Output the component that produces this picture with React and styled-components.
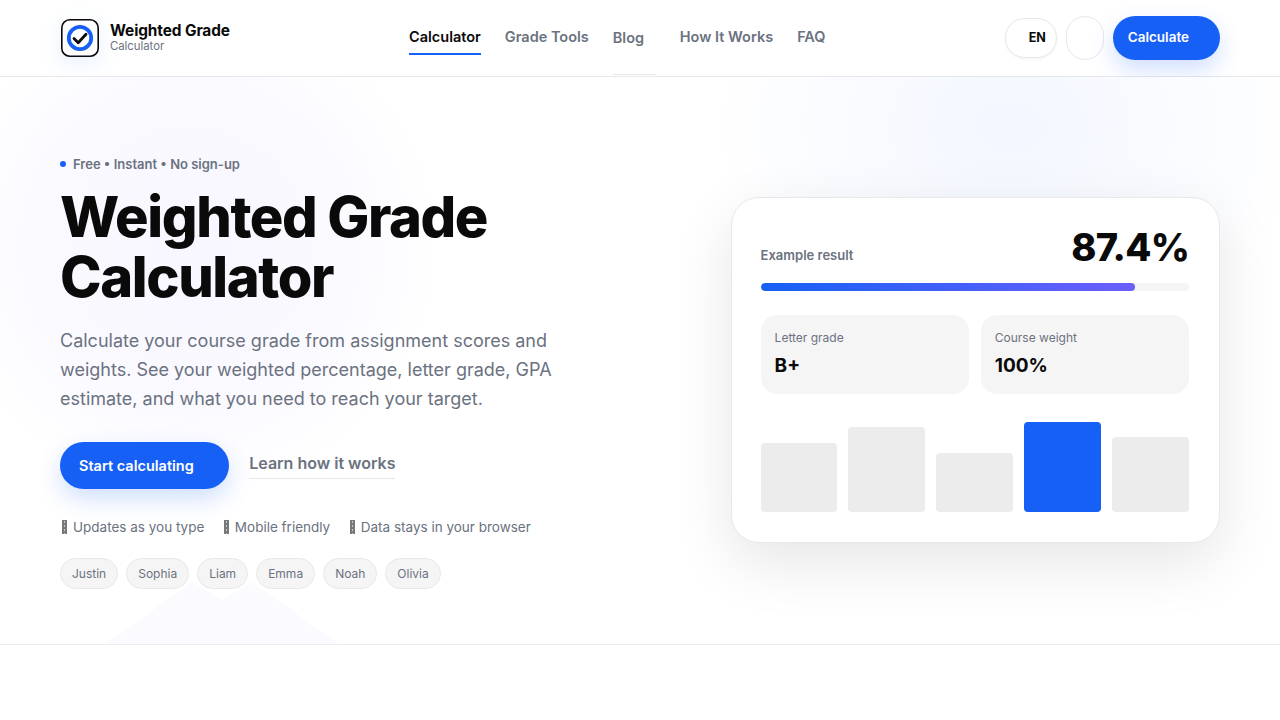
import React from "react";
import styled, { createGlobalStyle } from "styled-components";

const GlobalStyle = createGlobalStyle`
  * { box-sizing: border-box; }
  body {
    margin: 0;
    background: #fff;
    color: #0a0a0a;
    font-family: Inter, "Noto Sans", sans-serif;
  }
`;

const Header = styled.header`
  height: 77px;
  padding: 0 60px;
  display: grid;
  grid-template-columns: 349px 1fr auto;
  background: #fff;
  border-bottom: 1px solid #e8e8ea;
`;

const Brand = styled.div`
  display: flex;
  align-items: center;
  gap: 11px;
  padding-left: 1px;
`;

const LogoMark = styled.svg`
  filter: drop-shadow(0 6px 10px rgba(22, 96, 245, 0.1));
`;

const BrandText = styled.div`
  display: flex;
  flex-direction: column;
  margin-top: -1px;
`;

const BrandName = styled.span`
  font-size: 15.4px;
  font-weight: 700;
  line-height: 16px;
  letter-spacing: -0.1px;
`;

const BrandSub = styled.span`
  font-size: 11.3px;
  line-height: 14px;
  color: #6b7280;
`;

const Nav = styled.nav`
  display: flex;
  align-items: flex-start;
  gap: 24px;
`;

const NavLink = styled.a`
  height: 55px;
  padding-top: 28px;
  font-size: 14.5px;
  font-weight: 600;
  line-height: 18px;
  color: ${(p) => (p.$active ? "#0a0a0a" : "#6b7280")};
  border-bottom: 2px solid ${(p) => (p.$active ? "#1660f5" : "transparent")};
`;

const BlogLink = styled.a`
  width: 43px;
  height: 76px;
  padding-top: 30px;
  font-size: 14.5px;
  font-weight: 600;
  line-height: 18px;
  color: #6b7280;
  border-bottom: 1px solid #e6e6e8;
  margin-top: -1px;
`;

const Actions = styled.div`
  display: flex;
  align-items: center;
  gap: 9px;
  height: 76px;
`;

const LangButton = styled.button`
  width: 52px;
  height: 40px;
  padding: 0 0 2px 23px;
  text-align: left;
  border: 1px solid #e8e8ea;
  border-radius: 999px;
  background: #fff;
  font: 700 12.5px Inter, sans-serif;
  color: #0a0a0a;
  box-shadow: 0 1px 3px rgba(0, 0, 0, 0.05);
`;

const RoundButton = styled.button`
  width: 38px;
  height: 44px;
  border: 1px solid #e8e8ea;
  border-radius: 999px;
  background: #fff;
`;

const PrimaryButton = styled.button`
  height: ${(p) => (p.$large ? "47px" : "44px")};
  padding: ${(p) => (p.$large ? "0 35px 0 19px" : "0 31px 2px 15px")};
  border: none;
  border-radius: 999px;
  background: #1660f5;
  color: #fff;
  font: 600 ${(p) => (p.$large ? "14.5px" : "13.5px")} Inter, sans-serif;
  box-shadow: 0 10px 24px rgba(22, 96, 245, 0.2);
`;

const Hero = styled.section`
  position: relative;
  overflow: hidden;
  height: 568px;
  padding: 79px 60px 0;
  display: grid;
  grid-template-columns: 1fr 489.4px;
  background:
    radial-gradient(circle at 190px 170px, rgba(124, 92, 255, 0.055), rgba(124, 92, 255, 0.03) 170px, rgba(124, 92, 255, 0) 250px),
    radial-gradient(ellipse 300px 240px at 1010px 50px, rgba(22, 96, 245, 0.055), rgba(22, 96, 245, 0) 100%),
    #fff;
  border-bottom: 1px solid #ececee;

  &::after {
    content: "";
    position: absolute;
    left: 105px;
    bottom: 0;
    width: 234px;
    height: 62px;
    background: rgba(124, 92, 255, 0.03);
    clip-path: polygon(0 62px, 87px 0, 117px 18px, 147px 0, 234px 62px);
  }
`;

const HeroCopy = styled.div`
  position: relative;
  z-index: 1;
  min-width: 0;
`;

const Eyebrow = styled.div`
  display: flex;
  align-items: center;
  gap: 7px;
  height: 16px;
  font-size: 13px;
  font-weight: 600;
  color: #6b7280;
`;

const Dot = styled.span`
  width: 6px;
  height: 6px;
  border-radius: 50%;
  background: #1660f5;
`;

const Title = styled.h1`
  margin: 15px 0 0;
  font-size: 56px;
  font-weight: 800;
  line-height: 60px;
  letter-spacing: -1.4px;
  color: #0a0a0a;
`;

const Lead = styled.p`
  margin: 19px 0 0;
  width: 520px;
  font-size: 18px;
  line-height: 29px;
  color: #6b7280;
`;

const CtaRow = styled.div`
  display: flex;
  align-items: flex-start;
  gap: 20.5px;
  margin-top: 29px;
`;

const TextLink = styled.a`
  margin-top: 11px;
  padding-bottom: 4px;
  font-size: 16px;
  font-weight: 600;
  line-height: 21px;
  color: #6b7280;
  border-bottom: 1px solid #e6e6e8;
`;

const Checks = styled.ul`
  display: flex;
  gap: 17.5px;
  margin: 29px 0 0;
  padding: 0;
  list-style: none;
`;

const Check = styled.li`
  display: flex;
  align-items: center;
  gap: 6px;
  font-size: 13.5px;
  line-height: 18px;
  color: #6b7280;
`;

const MissingGlyph = styled.span`
  width: 5px;
  height: 14px;
  margin-left: 2px;
  background: #77787c;
  background-image: radial-gradient(circle, #c9c9cc 0.8px, transparent 1px);
  background-size: 5px 4px;
`;

const Chips = styled.div`
  display: flex;
  gap: 8px;
  margin-top: 22px;
`;

const Chip = styled.span`
  height: 31px;
  padding: 0 11px;
  display: flex;
  align-items: center;
  border: 1px solid #e8e8ea;
  border-radius: 999px;
  background: #f5f5f5;
  font-size: 12px;
  color: #6b7280;
`;

const Card = styled.div`
  position: relative;
  z-index: 1;
  align-self: start;
  height: 346px;
  margin-top: 41px;
  padding: 30px 30px 30px 29px;
  background: #fff;
  border: 1px solid #e8e8ea;
  border-radius: 28px;
  box-shadow: 0 20px 60px rgba(10, 10, 10, 0.1);
`;

const ResultRow = styled.div`
  display: flex;
  align-items: center;
  justify-content: space-between;
  height: 44px;
`;

const ResultLabel = styled.span`
  margin-top: 9px;
  font-size: 13px;
  font-weight: 600;
  color: #6b7280;
`;

const ResultValue = styled.span`
  margin-top: -6px;
  font-size: 38px;
  font-weight: 800;
  line-height: 44px;
  letter-spacing: -0.76px;
`;

const Track = styled.div`
  height: 8px;
  margin-top: 11px;
  border-radius: 999px;
  background: #f5f5f5;
  overflow: hidden;
`;

const Fill = styled.div`
  height: 100%;
  border-radius: 999px;
  background: linear-gradient(90deg, #1660f5, #6c5ffb);
`;

const Stats = styled.div`
  display: grid;
  grid-template-columns: 1fr 1fr;
  gap: 12px;
  margin-top: 24px;
`;

const Stat = styled.div`
  height: 79px;
  padding: 14px;
  border-radius: 16px;
  background: #f5f5f5;
`;

const StatLabel = styled.div`
  font-size: 12px;
  line-height: 18px;
  color: #6b7280;
`;

const StatValue = styled.div`
  margin-top: 6px;
  font-size: 19px;
  font-weight: 700;
  line-height: 26px;
`;

const Bars = styled.div`
  display: grid;
  grid-template-columns: repeat(5, 1fr);
  gap: 11px;
  align-items: end;
  height: 90px;
  margin-top: 28px;
`;

const Bar = styled.div`
  border-radius: 4px;
  background: ${(p) => (p.$active ? "#1660f5" : "#ececec")};
`;

const Logo = () => (
  <LogoMark width="38" height="38" viewBox="0 0 38 38" fill="none">
    <rect x="0.8" y="0.8" width="36.4" height="36.4" rx="8" fill="#fff" stroke="#0a0a0a" strokeWidth="1.6" />
    <circle cx="19" cy="19" r="11.2" stroke="#1660f5" strokeWidth="3.8" />
    <path d="M13 19.5l4.2 4.2 7.8-8.4" stroke="#0a0a0a" strokeWidth="2.8" strokeLinecap="round" strokeLinejoin="round" />
  </LogoMark>
);

const chips = ["Justin", "Sophia", "Liam", "Emma", "Noah", "Olivia"];
const checks = ["Updates as you type", "Mobile friendly", "Data stays in your browser"];
const bars = [69, 85, 59, 90, 75];

export default function App() {
  return (
    <>
      <GlobalStyle />
      <Header>
        <Brand>
          <Logo />
          <BrandText>
            <BrandName>Weighted Grade</BrandName>
            <BrandSub>Calculator</BrandSub>
          </BrandText>
        </Brand>
        <Nav>
          <NavLink $active>Calculator</NavLink>
          <NavLink>Grade Tools</NavLink>
          <BlogLink>Blog</BlogLink>
          <NavLink>How It Works</NavLink>
          <NavLink>FAQ</NavLink>
        </Nav>
        <Actions>
          <LangButton>EN</LangButton>
          <RoundButton aria-label="Theme" />
          <PrimaryButton>Calculate</PrimaryButton>
        </Actions>
      </Header>
      <Hero>
        <HeroCopy>
          <Eyebrow>
            <Dot />
            Free • Instant • No sign-up
          </Eyebrow>
          <Title>
            Weighted Grade
            <br />
            Calculator
          </Title>
          <Lead>
            Calculate your course grade from assignment scores and weights. See your weighted
            percentage, letter grade, GPA estimate, and what you need to reach your target.
          </Lead>
          <CtaRow>
            <PrimaryButton $large>Start calculating</PrimaryButton>
            <TextLink>Learn how it works</TextLink>
          </CtaRow>
          <Checks>
            {checks.map((c) => (
              <Check key={c}>
                <MissingGlyph />
                {c}
              </Check>
            ))}
          </Checks>
          <Chips>
            {chips.map((c) => (
              <Chip key={c}>{c}</Chip>
            ))}
          </Chips>
        </HeroCopy>
        <Card>
          <ResultRow>
            <ResultLabel>Example result</ResultLabel>
            <ResultValue>87.4%</ResultValue>
          </ResultRow>
          <Track>
            <Fill style={{ width: "87.4%" }} />
          </Track>
          <Stats>
            <Stat>
              <StatLabel>Letter grade</StatLabel>
              <StatValue>B+</StatValue>
            </Stat>
            <Stat>
              <StatLabel>Course weight</StatLabel>
              <StatValue>100%</StatValue>
            </Stat>
          </Stats>
          <Bars>
            {bars.map((h, i) => (
              <Bar key={i} $active={i === 3} style={{ height: h }} />
            ))}
          </Bars>
        </Card>
      </Hero>
    </>
  );
}
